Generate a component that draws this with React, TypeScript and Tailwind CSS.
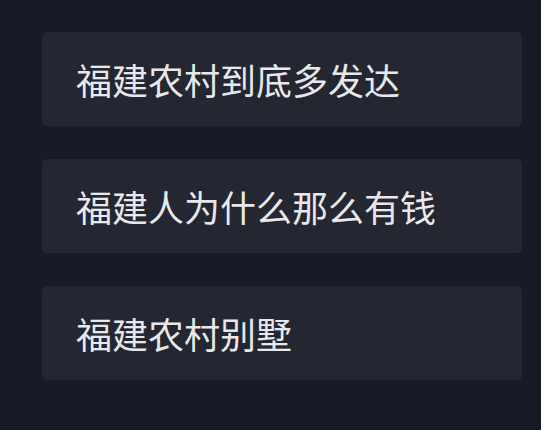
import React from 'react';

const items = ['福建农村到底多发达', '福建人为什么那么有钱', '福建农村别墅'];

export default function App() {
  return (
    <div className="min-h-[430px] w-full bg-[#181b25] pt-[32px] pl-[42px] pr-[19px]">
      <div className="flex flex-col gap-[33px]">
        {items.map((text) => (
          <div
            key={text}
            className="flex h-[94px] items-center rounded-[5px] bg-[#242731] pl-[34px]"
          >
            <span
              className="text-[36px] leading-none text-[#e8e8ea]"
              style={{ fontFamily: '"Noto Sans CJK SC", "Noto Sans", sans-serif' }}
            >
              {text}
            </span>
          </div>
        ))}
      </div>
    </div>
  );
}
